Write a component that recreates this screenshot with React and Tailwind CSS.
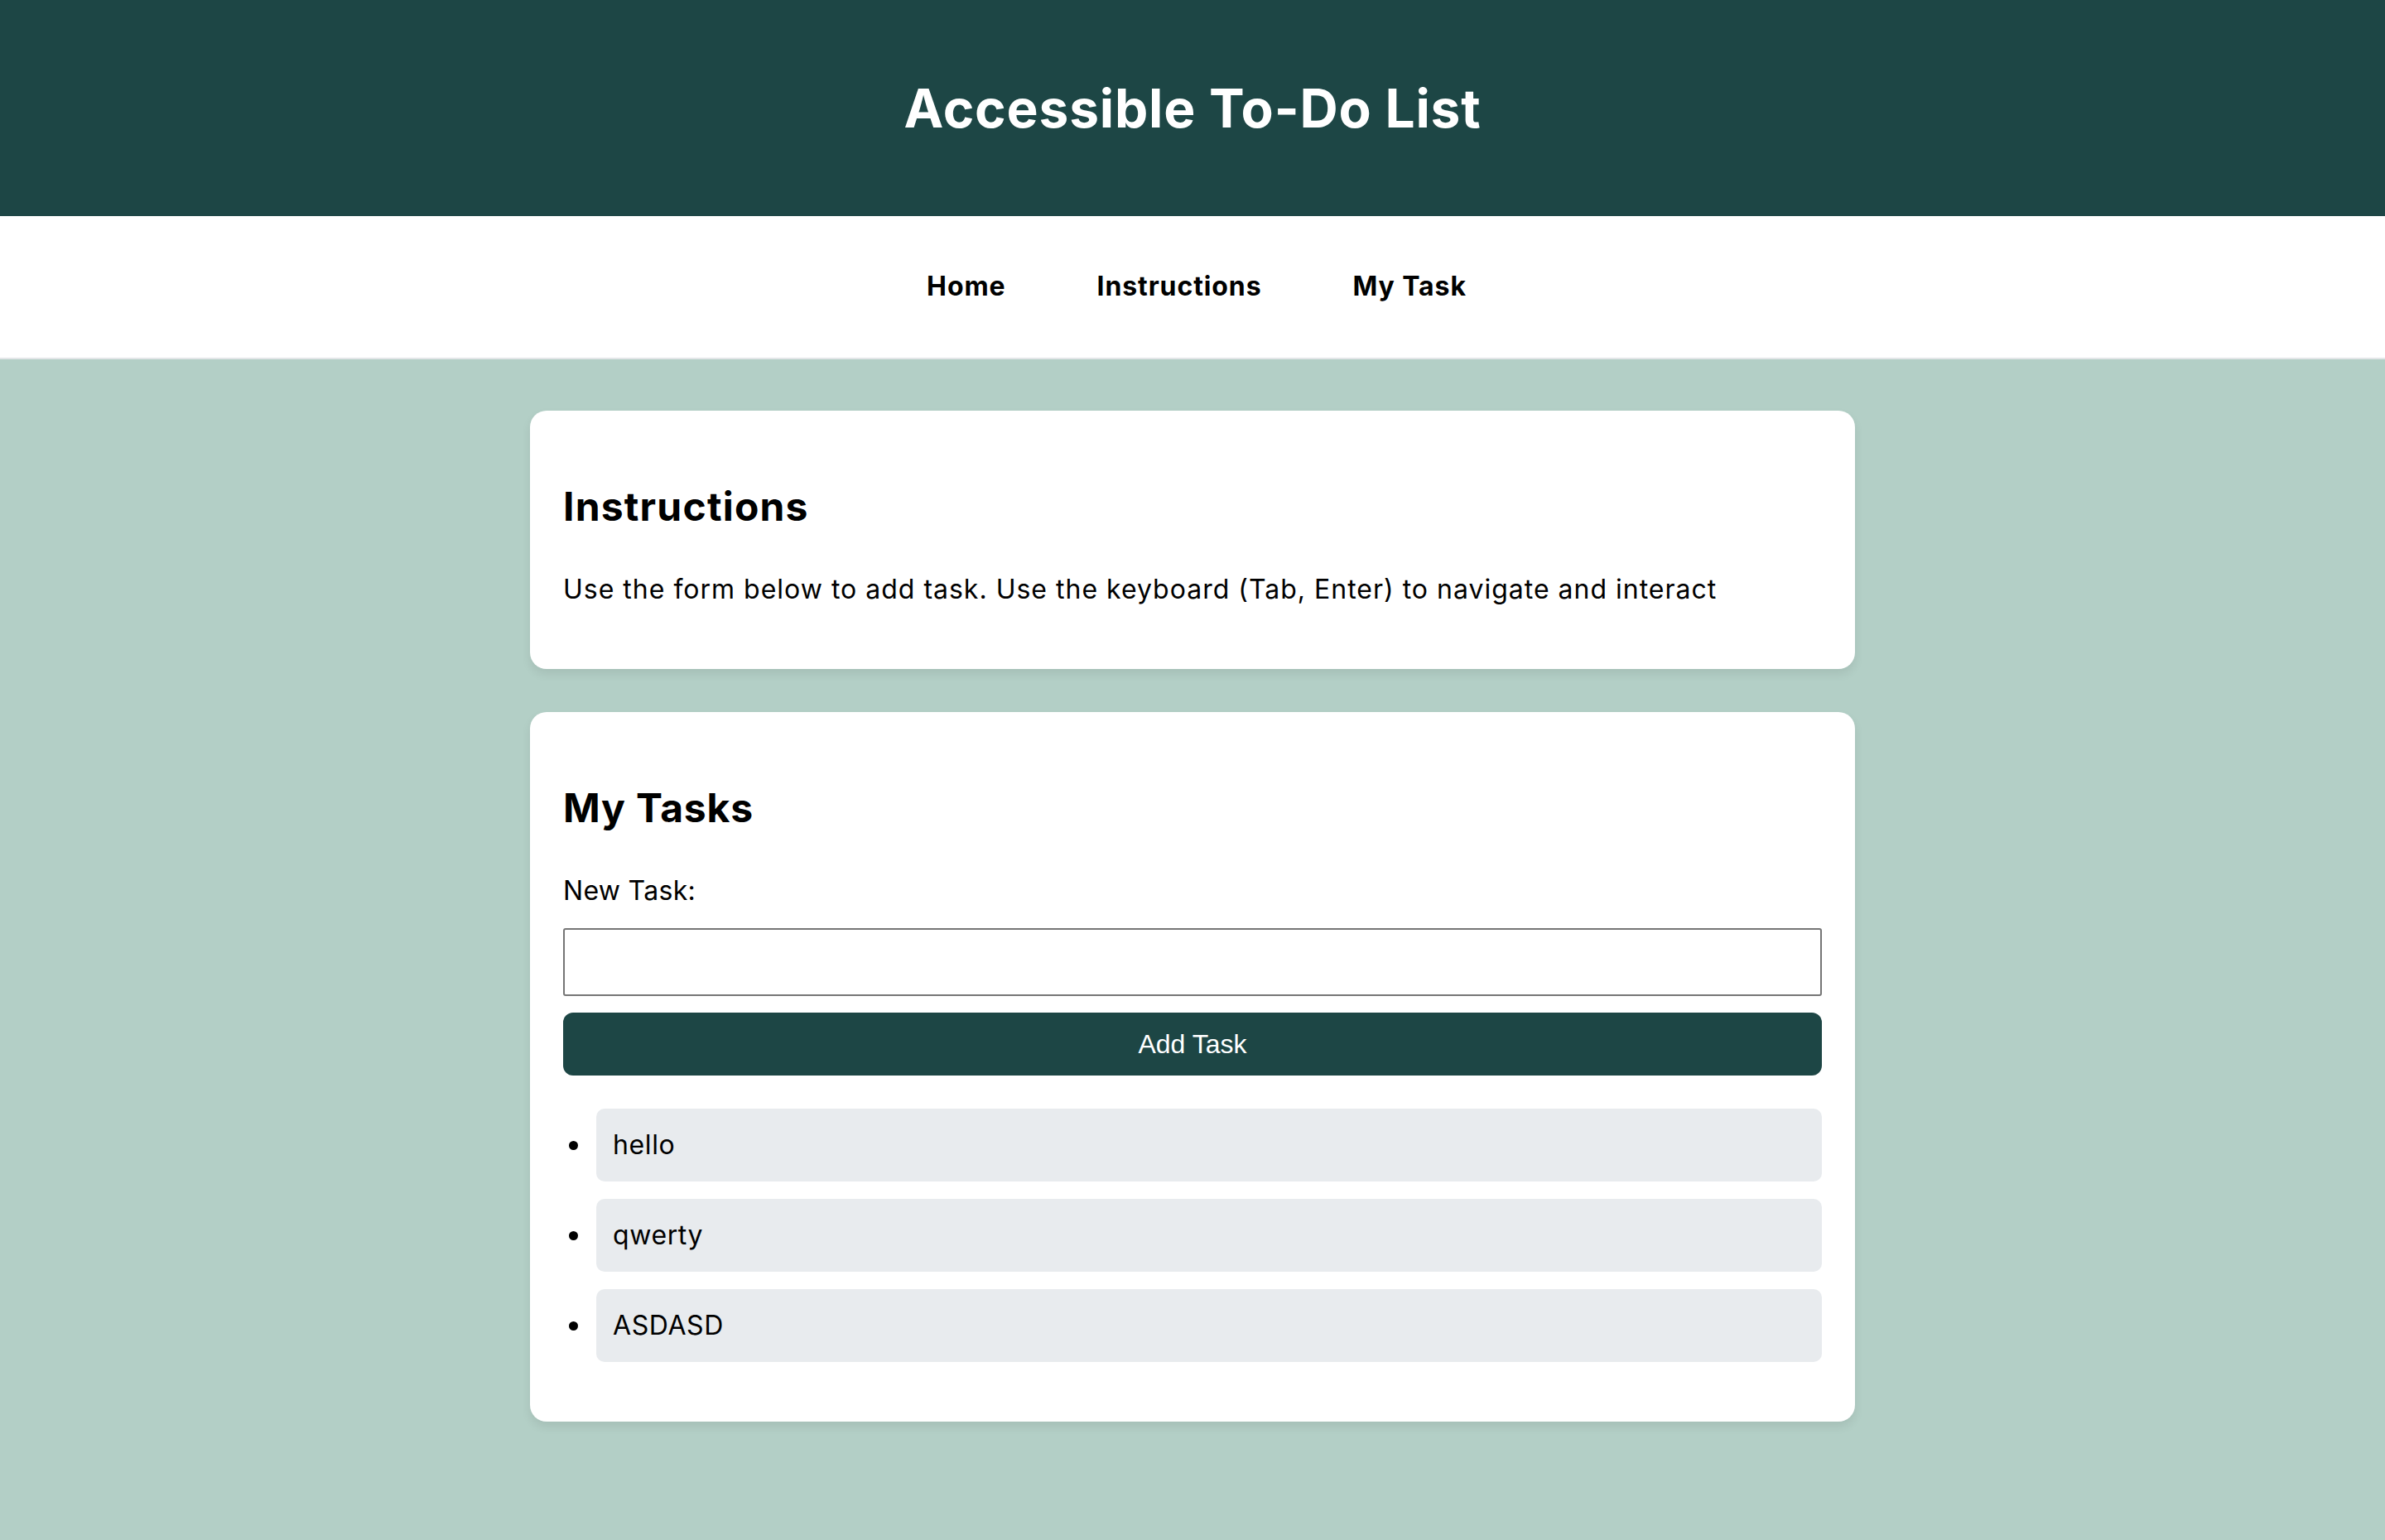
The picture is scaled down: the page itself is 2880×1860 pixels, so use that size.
import React, { useState } from 'react';

const navLinks = ['Home', 'Instructions', 'My Task'];

export default function App() {
  const [tasks, setTasks] = useState(['hello', 'qwerty', 'ASDASD']);
  const [value, setValue] = useState('');

  const addTask = (e) => {
    e.preventDefault();
    if (!value.trim()) return;
    setTasks([...tasks, value.trim()]);
    setValue('');
  };

  return (
    <div className="min-h-screen bg-[#b3cfc6] text-black font-['Inter','Noto_Sans',sans-serif]">
      <header className="h-[261px] bg-[#1d4645] flex items-center justify-center">
        <h1 className="text-[64px] leading-none font-bold text-white tracking-[0.8px]">Accessible To-Do List</h1>
      </header>

      <nav className="h-[173px] bg-white border-b-2 border-[#e3e6e8] flex items-center justify-center">
        <ul className="flex items-center gap-[110px] pl-[10px]">
          {navLinks.map((l) => (
            <li key={l}>
              <a href="#" className="text-[32px] font-bold text-black leading-none tracking-[0.9px]">{l}</a>
            </li>
          ))}
        </ul>
      </nav>

      <main className="max-w-[1600px] mx-auto pt-[62px] pb-[80px]">
        <section className="bg-white rounded-[20px] shadow-[0_6px_12px_rgba(0,0,0,0.08)] px-10 pt-10 pb-10">
          <h2 className="mt-10 text-[48px] leading-[72px] font-bold tracking-[1.2px]">Instructions</h2>
          <p className="mt-10 mb-8 text-[32px] leading-[48px] tracking-[1px]">
            Use the form below to add task. Use the keyboard (Tab, Enter) to navigate and interact
          </p>
        </section>

        <section className="mt-[52px] bg-white rounded-[20px] shadow-[0_6px_12px_rgba(0,0,0,0.08)] px-10 pt-10 pb-10">
          <h2 className="mt-10 text-[48px] leading-[72px] font-bold tracking-[0.8px]">My Tasks</h2>
          <form onSubmit={addTask} className="mt-10 flex flex-col">
            <label htmlFor="task" className="text-[32px] leading-[48px] tracking-[0.3px]">New Task:</label>
            <input
              id="task"
              value={value}
              onChange={(e) => setValue(e.target.value)}
              className="mt-[21px] h-[82px] w-full border-2 border-[#767676] rounded-[3px] bg-white px-4 text-[32px]"
            />
            <button
              type="submit"
              className="mt-5 h-[76px] w-full rounded-[12px] bg-[#1d4645] text-white text-[32px] font-['Liberation_Sans',Arial,sans-serif]"
            >
              Add Task
            </button>
          </form>
          <ul className="mt-10 mb-8 flex flex-col gap-[21px]">
            {tasks.map((t, i) => (
              <li key={i} className="flex items-center">
                <span className="w-[40px] flex justify-start pl-[7px]">
                  <span className="w-[11px] h-[11px] rounded-full bg-black" />
                </span>
                <span className="flex-1 h-[88px] flex items-center rounded-[10px] bg-[#e8ebee] pl-[20px] text-[32px] tracking-[0.6px]">{t}</span>
              </li>
            ))}
          </ul>
        </section>
      </main>
    </div>
  );
}
